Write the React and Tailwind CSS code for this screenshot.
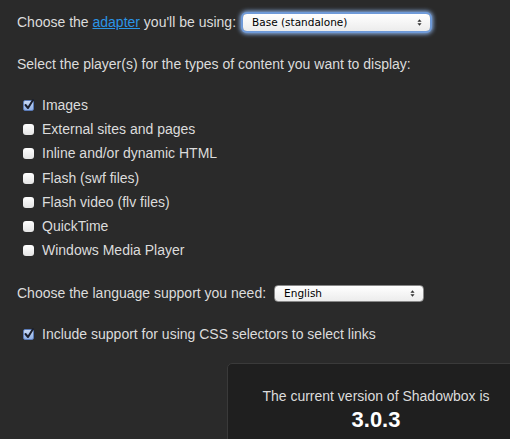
import React from "react";

const players = [
  { label: "Images", checked: true },
  { label: "External sites and pages" },
  { label: "Inline and/or dynamic HTML" },
  { label: "Flash (swf files)" },
  { label: "Flash video (flv files)" },
  { label: "QuickTime" },
  { label: "Windows Media Player" },
];

function Box({ checked }) {
  if (checked) {
    return (
      <span className="relative inline-block w-[11px] h-[11px] rounded-[2px] bg-gradient-to-b from-[#c9d9f3] to-[#8fb0e6] border border-[#5a7bb8] shrink-0">
        <svg viewBox="0 0 12 12" className="absolute -left-[1px] -top-[3px] w-[12px] h-[13px]">
          <path d="M2.5 6.5 L5 9.5 L10 1.5" fill="none" stroke="#1a1f2e" strokeWidth="2" strokeLinecap="round" strokeLinejoin="round" />
        </svg>
      </span>
    );
  }
  return <span className="inline-block w-[11px] h-[11px] rounded-[3px] bg-gradient-to-b from-white to-[#e4e4e4] shrink-0" />;
}

function Select({ value, width, focus }) {
  return (
    <div
      className={`flex items-center justify-between h-[17px] rounded-[4px] bg-gradient-to-b from-white to-[#ececec] pl-[9px] pr-[8px] text-[10.5px] text-black ${
        focus ? "shadow-[0_0_0_2px_#6f9ad8,0_0_4px_3px_#8fb6ee]" : "border border-[#888]"
      }`}
      style={{ width, fontFamily: '"DejaVu Sans", sans-serif' }}
    >
      <span>{value}</span>
      <svg viewBox="0 0 6 10" className="w-[5px] h-[9px]">
        <path d="M0.5 4 L3 1 L5.5 4 Z M0.5 6 L3 9 L5.5 6 Z" fill="#333" />
      </svg>
    </div>
  );
}

export default function App() {
  return (
    <div
      className="w-[510px] h-[439px] overflow-hidden bg-[#2a2a2a] text-[#dcdcdc] text-[14px]"
      style={{ fontFamily: '"Liberation Sans", Arial, sans-serif' }}
    >
      <div className="pl-[17px] pt-[13px]">
        <div className="flex items-center h-[19px] gap-[7px]">
          <span>
            Choose the <span className="text-[#2b95e6] underline">adapter</span> you'll be using:
          </span>
          <Select value="Base (standalone)" width={187} focus />
        </div>
        <div className="mt-[22px] h-[19px]">Select the player(s) for the types of content you want to display:</div>
        <div className="mt-[20px] pl-[6px] flex flex-col">
          {players.map((p) => (
            <div key={p.label} className="flex items-center gap-[8px] h-[24.3px]">
              <Box checked={p.checked} />
              <span>{p.label}</span>
            </div>
          ))}
        </div>
        <div className="mt-[21px] flex items-center h-[19px] gap-[8px]">
          <span>Choose the language support you need:</span>
          <Select value="English" width={150} />
        </div>
        <div className="mt-[22px] pl-[6px] flex items-center gap-[8px] h-[19px]">
          <Box checked />
          <span>Include support for using CSS selectors to select links</span>
        </div>
      </div>
      <div className="mt-[19px] ml-[227px] w-[298px] h-[100px] rounded-[5px] bg-[#1f1f1f] border border-[#3a3a3a] flex flex-col items-center pt-[22px]">
        <div className="text-[14px] text-[#dcdcdc]">The current version of Shadowbox is</div>
        <div className="text-[22px] font-bold text-white leading-[26px]">3.0.3</div>
      </div>
    </div>
  );
}
